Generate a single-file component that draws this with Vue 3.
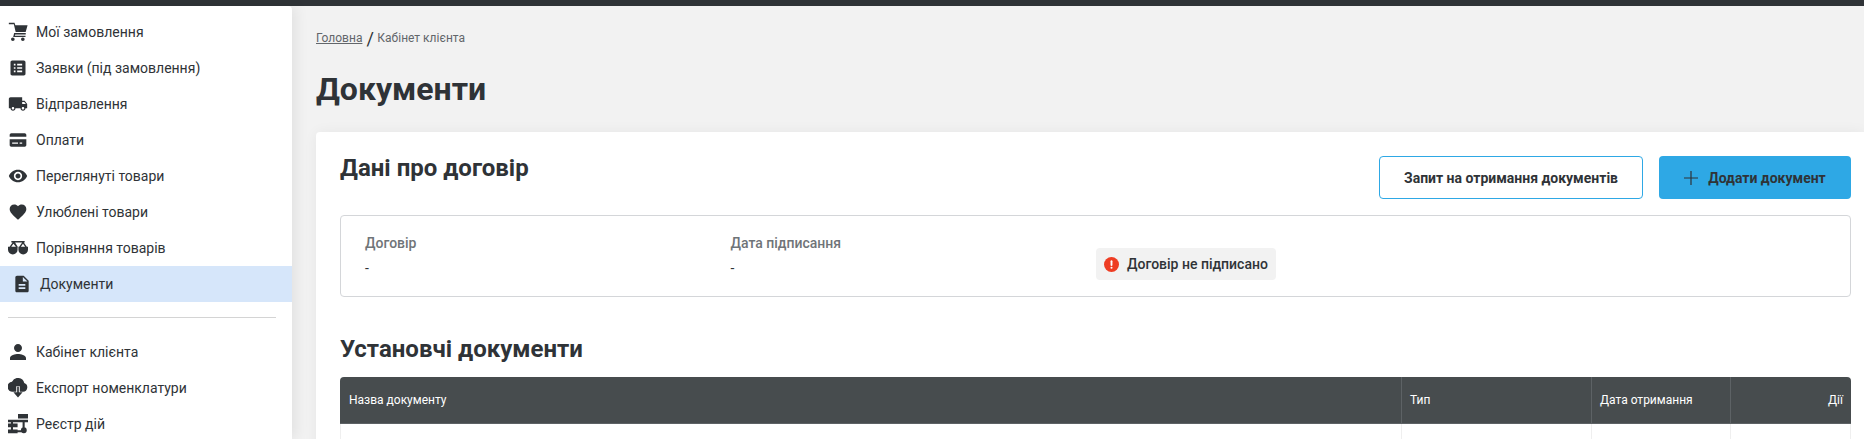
<script setup>
const mainItems = [
  { label: "Мої замовлення", icon: "cart" },
  { label: "Заявки (під замовлення)", icon: "list" },
  { label: "Відправлення", icon: "truck" },
  { label: "Оплати", icon: "card" },
  { label: "Переглянуті товари", icon: "eye" },
  { label: "Улюблені товари", icon: "heart" },
  { label: "Порівняння товарів", icon: "scale" },
  { label: "Документи", icon: "doc", active: true },
];
const extraItems = [
  { label: "Кабінет клієнта", icon: "person" },
  { label: "Експорт номенклатури", icon: "cloud" },
  { label: "Реєстр дій", icon: "tree" },
];
const paths = {
  cart: "M1 1h6.800l1 3H23.500l-2.300 8H9.200L7 2.800H1V1zM8.300 13.200h13V15H8.700l-.4 1.500H21v1.600H6.200l1.200-4.900zM5.800 18.500a2.200 2.200 0 1 1 0 4.400 2.200 2.200 0 0 1 0-4.400zm12 0a2.200 2.200 0 1 1 0 4.400 2.200 2.200 0 0 1 0-4.400z",
  list: "M19 3H5c-1.100 0-2 .9-2 2v14c0 1.100.9 2 2 2h14c1.100 0 2-.9 2-2V5c0-1.100-.9-2-2-2zM9 17H7v-2h2v2zm0-4H7v-2h2v2zm0-4H7V7h2v2zm8 8h-6v-2h6v2zm0-4h-6v-2h6v2zm0-4h-6V7h6v2z",
  truck: "M20 8h-3V4H3c-1.100 0-2 .9-2 2v11h2c0 1.660 1.340 3 3 3s3-1.340 3-3h6c0 1.660 1.340 3 3 3s3-1.340 3-3h2v-5l-3-4zM6 18.500c-.83 0-1.500-.67-1.500-1.500s.67-1.500 1.500-1.500 1.500.67 1.500 1.500-.67 1.500-1.500 1.500zm13.500-9l1.960 2.500H17V9.500h2.500zm-1.500 9c-.83 0-1.500-.67-1.500-1.500s.67-1.500 1.500-1.500 1.500.67 1.500 1.500-.67 1.500-1.500 1.500z",
  card: "M20 4H4c-1.100 0-2 .9-2 2v2h20V6c0-1.100-.9-2-2-2zM2 11v7c0 1.100.9 2 2 2h16c1.100 0 2-.9 2-2v-7H2zm3 4h7v1.500H5V15zm9 0h3v1.500h-3V15z",
  eye: "M12 4.500C7 4.500 2.730 7.610 1 12c1.730 4.390 6 7.500 11 7.500s9.270-3.110 11-7.500c-1.730-4.390-6-7.500-11-7.500zM12 17c-2.760 0-5-2.240-5-5s2.240-5 5-5 5 2.240 5 5-2.240 5-5 5zm0-8c-1.660 0-3 1.340-3 3s1.340 3 3 3 3-1.340 3-3-1.340-3-3-3z",
  heart: "M12 21.350l-1.450-1.320C5.400 15.360 2 12.280 2 8.500 2 5.420 4.420 3 7.500 3c1.740 0 3.410.81 4.500 2.090C13.090 3.810 14.760 3 16.500 3 19.580 3 22 5.420 22 8.500c0 3.780-3.400 6.860-8.550 11.540L12 21.350z",
  scale: "M4 3.500h16v2h-1l4 5.500h-2l-3-4.200-3 4.200h-2l4-5.500H8.500L12 11h-2L6.500 6.800 3.500 11h-2l4-5.500H4v-2zM0 10.500h11.500V14a5.750 5.750 0 0 1-11.500 0v-3.500zm12.500 0H24V14a5.750 5.750 0 0 1-11.500 0v-3.500z",
  doc: "M14 2H6c-1.100 0-1.990.9-1.990 2L4 20c0 1.100.89 2 1.990 2H18c1.100 0 2-.9 2-2V8l-6-6zm2 16H8v-2h8v2zm0-4H8v-2h8v2zm-3-5V3.500L18.500 9H13z",
  person: "M12 12c2.210 0 4-1.790 4-4s-1.790-4-4-4-4 1.790-4 4 1.790 4 4 4zm0 2c-2.670 0-8 1.340-8 4v2h16v-2c0-2.660-5.330-4-8-4z",
  cloud: "M19.500 6A7.800 7.800 0 0 0 4.800 4.500 6 6 0 0 0 6 16.500H9.900V10h4.200v6.500H18A5.400 5.400 0 0 0 19.500 6zM11 10.500h2V17h4.500L12 23.500 6.500 17H11v-6.500z",
  tree: "M12 0h12v5.500H12V0zM0 7h24v3H0V7zM3.500 10h2.500v2H3.500v-2zM0 11.500h11.500V16H0v-4.500zM3.500 16h2.500v3H3.500v-3zM17.500 10h2.500v7h-2.500v-7zM0 18.500h11.500V23H0v-4.500zM11 19.500h6v2.500h-6v-2.500zM19 16a3.500 3.500 0 1 1 0 7 3.500 3.500 0 0 1 0-7z",
};
const viewBoxes = { person: "2 2 20 20" };
</script>

<template>
  <div class="page">
    <div class="topbar"></div>
    <div class="layout">
      <aside class="sidebar">
        <nav class="menu">
          <a v-for="item in mainItems" :key="item.label" class="menu-item" :class="{ active: item.active }">
            <svg class="menu-icon" :viewBox="viewBoxes[item.icon] || '0 0 24 24'"><path :d="paths[item.icon]" /></svg>
            <span>{{ item.label }}</span>
          </a>
        </nav>
        <div class="divider"></div>
        <nav class="menu">
          <a v-for="item in extraItems" :key="item.label" class="menu-item">
            <svg class="menu-icon" :viewBox="viewBoxes[item.icon] || '0 0 24 24'"><path :d="paths[item.icon]" /></svg>
            <span>{{ item.label }}</span>
          </a>
        </nav>
      </aside>

      <main class="content">
        <div class="breadcrumbs">
          <a class="crumb-link">Головна</a>
          <span class="crumb-sep">/</span>
          <span class="crumb-current">Кабінет клієнта</span>
        </div>
        <h1 class="page-title">Документи</h1>

        <section class="card">
          <div class="card-head">
            <h2 class="section-title">Дані про договір</h2>
            <div class="actions">
              <button class="btn btn-outline">Запит на отримання документів</button>
              <button class="btn btn-primary">
                <svg class="plus" viewBox="0 0 14 14"><path d="M7 0v14M0 7h14" /></svg>
                Додати документ
              </button>
            </div>
          </div>

          <div class="contract">
            <div class="contract-col">
              <div class="contract-label">Договір</div>
              <div class="contract-value">-</div>
            </div>
            <div class="contract-col">
              <div class="contract-label">Дата підписання</div>
              <div class="contract-value">-</div>
            </div>
            <div class="status">
              <svg class="status-icon" viewBox="0 0 16 16">
                <circle cx="8" cy="8" r="8" fill="#ee3d23" />
                <rect x="7" y="3.500" width="2" height="6" rx="1" fill="#fff" />
                <circle cx="8" cy="11.500" r="1.100" fill="#fff" />
              </svg>
              Договір не підписано
            </div>
          </div>

          <h2 class="section-title founding">Установчі документи</h2>

          <div class="table">
            <div class="table-row table-head">
              <div class="cell">Назва документу</div>
              <div class="cell">Тип</div>
              <div class="cell">Дата отримання</div>
              <div class="cell cell-right">Дії</div>
            </div>
            <div class="table-row table-body">
              <div class="cell"></div>
              <div class="cell"></div>
              <div class="cell"></div>
              <div class="cell"></div>
            </div>
          </div>
        </section>
      </main>
    </div>
  </div>
</template>

<style>
html,
body {
  margin: 0;
  height: 100%;
  overflow: hidden;
}
</style>

<style scoped>
.page {
  height: 439px;
  overflow: hidden;
  background: #f2f2f2;
  font-family: Roboto, "Noto Sans", sans-serif;
  color: #2f3337;
}
.topbar {
  height: 6px;
  background: #2f3337;
}
.layout {
  display: flex;
  height: 433px;
}
.sidebar {
  width: 292px;
  flex-shrink: 0;
  background: #fff;
  border-top-right-radius: 4px;
  box-shadow: 4px 0 14px rgba(0, 0, 0, 0.07);
  padding-top: 8px;
  box-sizing: border-box;
  position: relative;
}
.menu-item {
  display: flex;
  align-items: center;
  height: 36px;
  padding-left: 8px;
  font-size: 14px;
}
.menu-icon {
  width: 20px;
  height: 20px;
  margin-right: 8px;
  fill: #2f3337;
  flex-shrink: 0;
}
.menu-item.active {
  background: #d6e6fa;
  padding-left: 12px;
}
.divider {
  height: 1px;
  margin: 15px 16px 16px 8px;
  background: #d4d4d4;
}
.content {
  flex: 1;
  min-width: 0;
  padding: 24px 0 0 24px;
}
.breadcrumbs {
  display: flex;
  align-items: center;
  height: 16px;
  font-size: 12px;
  color: #62666a;
}
.crumb-link {
  text-decoration: underline;
}
.crumb-sep {
  margin: 0 3.500px 0 4px;
  font-size: 18px;
  color: #2f3337;
}
.page-title {
  margin: 24px 0 24px;
  font-size: 32px;
  line-height: 38px;
  font-weight: 700;
}
.card {
  background: #fff;
  border-radius: 4px 0 0 0;
  padding: 22px 13px 0 24px;
  box-shadow: 0 0 14px rgba(0, 0, 0, 0.05);
  height: 400px;
  box-sizing: border-box;
}
.card-head {
  display: flex;
  justify-content: space-between;
  align-items: flex-start;
  height: 45px;
}
.section-title {
  margin: 0;
  font-size: 24px;
  line-height: 28px;
  font-weight: 700;
}
.actions {
  display: flex;
  gap: 16px;
  margin-top: 2px;
}
.btn {
  height: 43px;
  border-radius: 4px;
  font-family: inherit;
  font-size: 14px;
  font-weight: 700;
  color: #2f3337;
  display: flex;
  align-items: center;
  box-sizing: border-box;
}
.btn-outline {
  width: 264px;
  justify-content: center;
  background: #fff;
  border: 1px solid #2ea8e5;
}
.btn-primary {
  width: 192px;
  justify-content: center;
  background: #2ea8e5;
  border: 0;
}
.plus {
  width: 14px;
  height: 14px;
  margin-right: 10px;
  stroke: #2f3337;
  stroke-width: 1.2;
  fill: none;
}
.contract {
  display: flex;
  align-items: flex-start;
  margin-top: 16px;
  height: 82px;
  box-sizing: border-box;
  border: 1px solid #d4d6d9;
  border-radius: 4px;
  padding: 19px 24px 0;
}
.contract-col {
  width: 365.500px;
}
.contract-label {
  font-size: 14px;
  font-weight: 500;
  line-height: 16px;
  color: #6f7478;
}
.contract-value {
  margin-top: 9px;
  font-size: 14px;
  line-height: 16px;
}
.status {
  display: flex;
  align-items: center;
  height: 32px;
  margin-top: 13px;
  padding: 0 8px;
  background: #f2f2f2;
  border-radius: 4px;
  font-size: 14px;
  font-weight: 500;
}
.status-icon {
  width: 15px;
  height: 15px;
  margin-right: 8px;
}
.founding {
  margin-top: 38px;
}
.table {
  margin-top: 14px;
}
.table-row {
  display: grid;
  grid-template-columns: 1062px 190px 139px 1fr;
}
.table-head {
  height: 47px;
  background: #474c4e;
  border-bottom: 1px solid #5d6265;
  box-sizing: border-box;
  border-radius: 4px 4px 0 0;
  color: #fff;
  font-size: 12px;
}
.table-head .cell {
  display: flex;
  align-items: center;
  padding: 0 8px;
  border-right: 1px solid #5d6265;
}
.table-head .cell:first-child {
  padding-left: 9px;
}
.table-head .cell:last-child {
  border-right: 0;
}
.cell-right {
  justify-content: flex-end;
}
.table-body {
  height: 40px;
}
.table-body .cell {
  border-right: 1px solid #efefef;
}
.table-body .cell:first-child {
  border-left: 1px solid #efefef;
}
</style>
